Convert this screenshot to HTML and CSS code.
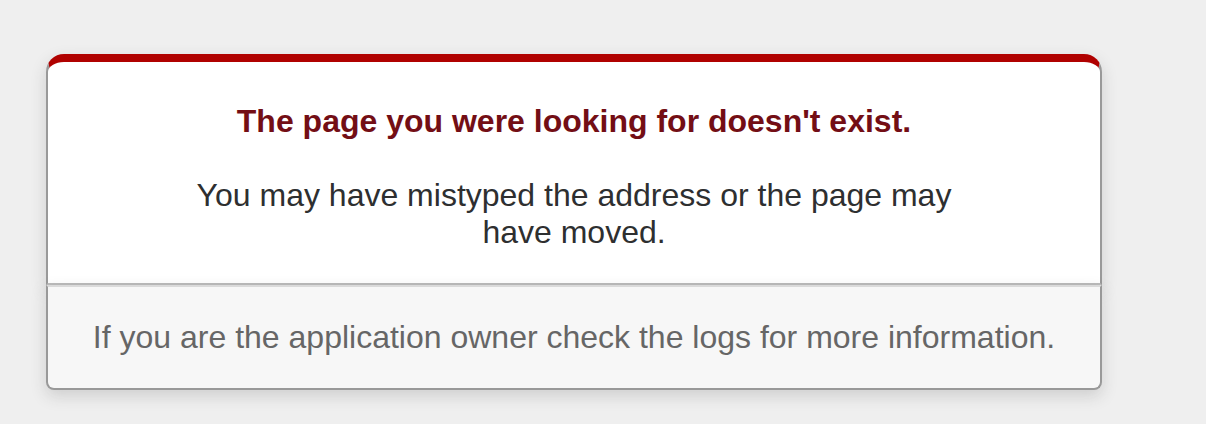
FILE: index.html
```html
<!DOCTYPE html>
<html>
<head>
<meta charset="utf-8">
<title>The page you were looking for doesn't exist (404)</title>
<link rel="stylesheet" href="styles.css">
</head>
<body class="error-page">
  <div class="dialog">
    <div class="dialog-main">
      <h1 class="title">The page you were looking for doesn't exist.</h1>
      <p class="message">You may have mistyped the address or the page may have moved.</p>
    </div>
    <p class="footer">If you are the application owner check the logs for more information.</p>
  </div>
</body>
</html>
```

FILE: styles.css
```css
html, body {
  margin: 0;
  padding: 0;
}

.error-page {
  background-color: #EFEFEF;
  color: #2E2F30;
  text-align: center;
  font-family: "Liberation Sans", Arial, sans-serif;
  font-size: 32px;
}

.dialog {
  width: 1056px;
  margin: 54px 0 0 46px;
}

.dialog-main {
  border: 2px solid #CCC;
  border-right-color: #999;
  border-left-color: #999;
  border-bottom-color: #BBB;
  border-top: 8px solid #B00100;
  border-top-left-radius: 18px;
  border-top-right-radius: 18px;
  background-color: #fff;
  padding: 14px 12% 0;
  box-shadow: 0 6px 16px rgba(50, 50, 50, 0.17);
}

.title {
  font-size: 100%;
  color: #730E15;
  line-height: 1.5em;
  margin: 0.67em 0;
}

.message {
  margin: 1em 0;
}

.footer {
  margin: 0 0 1em;
  padding: 1em;
  background-color: #F7F7F7;
  border: 2px solid #CCC;
  border-right-color: #999;
  border-left-color: #999;
  border-bottom-color: #999;
  border-bottom-left-radius: 8px;
  border-bottom-right-radius: 8px;
  border-top-color: #DADADA;
  color: #666;
  box-shadow: 0 6px 16px rgba(50, 50, 50, 0.17);
}
```
